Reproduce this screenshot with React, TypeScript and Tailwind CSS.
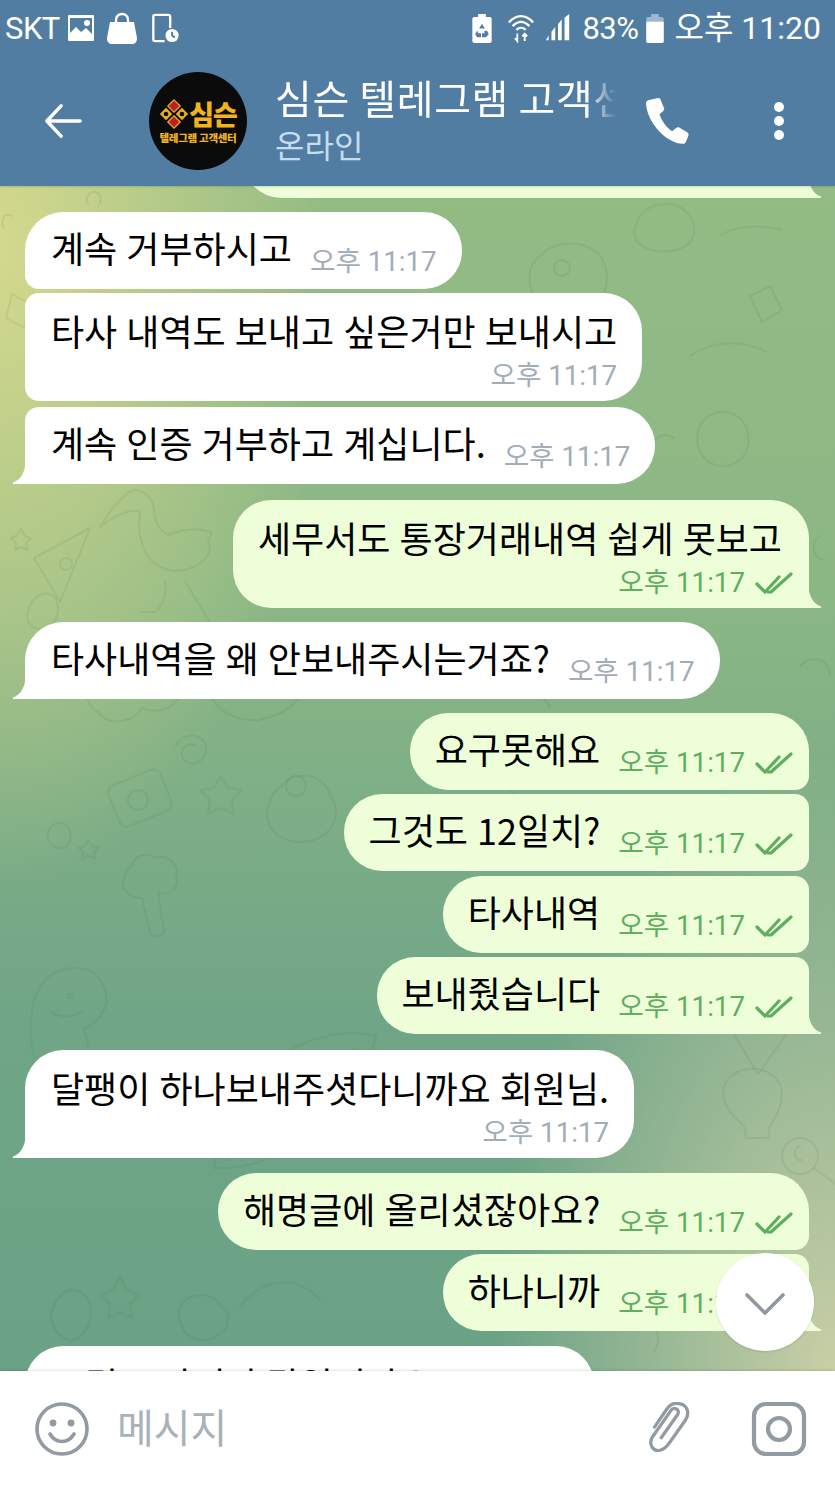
import React from 'react';

type Msg = { text: string; out?: boolean; tail?: boolean; stacked?: boolean; first?: boolean; mt: number };

const messages: Msg[] = [
  { text: '계속 거부하시고', first: true, mt: 14 },
  { text: '타사 내역도 보내고 싶은거만 보내시고', stacked: true, mt: 4 },
  { text: '계속 인증 거부하고 계십니다.', tail: true, mt: 6 },
  { text: '세무서도 통장거래내역 쉽게 못보고', out: true, tail: true, stacked: true, first: true, mt: 16 },
  { text: '타사내역을 왜 안보내주시는거죠?', tail: true, first: true, mt: 14 },
  { text: '요구못해요', out: true, first: true, mt: 14 },
  { text: '그것도 12일치?', out: true, mt: 4 },
  { text: '타사내역', out: true, mt: 5 },
  { text: '보내줬습니다', out: true, tail: true, mt: 4 },
  { text: '달팽이 하나보내주셧다니까요 회원님.', tail: true, stacked: true, first: true, mt: 16 },
  { text: '해명글에 올리셨잖아요?', out: true, first: true, mt: 15 },
  { text: '하나니까', out: true, tail: true, mt: 4 },
];

function Checks() {
  return (
    <svg viewBox="0 0 38 24" className="w-[38px] h-[24px] ml-[10px] shrink-0" fill="none" stroke="#5fae60" strokeWidth="3.2" strokeLinecap="round" strokeLinejoin="round">
      <path d="M2 13l8 8L24 6" />
      <path d="M13 21l3 0L36 3" />
    </svg>
  );
}

function Tail({ out }: { out?: boolean }) {
  if (out) {
    return (
      <svg viewBox="0 0 14 24" className="absolute -right-[13px] bottom-0 w-[14px] h-[24px]">
        <path d="M0 0C1 12 5 20 13 22.5 13.5 23.5 13 24 12 24H0Z" fill="#eefed9" />
      </svg>
    );
  }
  return (
    <svg viewBox="0 0 14 24" className="absolute -left-[13px] bottom-0 w-[14px] h-[24px]">
      <path d="M14 0C13 12 9 20 1 22.5 .5 23.5 1 24 2 24H14Z" fill="#ffffff" />
    </svg>
  );
}

function Bubble({ text, out, tail, stacked, first, mt }: Msg) {
  const timeColor = out ? 'text-[#5fae60]' : 'text-[#a3adb8]';
  const time = (
    <span className={`flex items-center whitespace-nowrap text-[27.7px] leading-[32px] font-['Roboto','Noto_Sans_CJK_KR',sans-serif] ${timeColor}`}>
      오후 11:17{out && <Checks />}
    </span>
  );
  const shape = out
    ? `bg-[#eefed9] pl-[25px] pr-[16px] rounded-l-[38px] ${first ? 'rounded-tr-[38px]' : 'rounded-tr-[14px]'} ${tail ? 'rounded-br-none' : 'rounded-br-[14px]'}`
    : `bg-white pl-[26px] pr-[25px] rounded-r-[38px] ${first ? 'rounded-tl-[38px]' : 'rounded-tl-[14px]'} ${tail ? 'rounded-bl-none' : 'rounded-bl-[14px]'}`;
  return (
    <div className={`flex ${out ? 'justify-end pr-[26px]' : 'justify-start pl-[25px]'}`} style={{ marginTop: mt }}>
      <div className={`relative ${shape}`}>
        {stacked ? (
          <div className="flex flex-col h-[108px] pt-[12px]">
            <p className={`text-[36px] leading-[50px] [word-spacing:1px] text-black whitespace-nowrap ${out ? 'pr-[11px]' : ''}`}>{text}</p>
            <div className="flex justify-end mt-[5px]">{time}</div>
          </div>
        ) : (
          <div className="flex items-end h-[77px] pb-[11px]">
            <p className="text-[36px] leading-[50px] [word-spacing:1px] text-black whitespace-nowrap pb-[6px]">{text}</p>
            <div className="ml-[18px]">{time}</div>
          </div>
        )}
        {tail && <Tail out={out} />}
      </div>
    </div>
  );
}

// faint wallpaper drawing behind the messages
function Doodles() {
  return (
    <svg className="absolute inset-0 w-full h-full" viewBox="0 0 835 1185" fill="none" stroke="#3d6b45" strokeOpacity="0.1" strokeWidth="2" strokeLinecap="round" strokeLinejoin="round">
      {/* duck */}
      <path d="M130 305c12-3 22 5 24 18 1 12 4 20 14 26 14-6 32-8 44-2l-4 8c6 10-4 24-20 28-14 4-26 2-36-8-12-12-14-32-12-50-12-2-24 4-40 16 8-14 18-26 30-36z" />
      <path d="M165 396c2 12-2 24-10 30l-14 0M185 395l30 50" />
      {/* pizza and mushroom */}
      <path d="M34 372l56-30-30 74-26-44z" />
      <circle cx="66" cy="378" r="6" />
      <path d="M30 420c8-18 28-16 28 2s-12 22-22 20-10-12-6-22z" />
      <path d="M16 350l5-7 4 7 6 2-5 5 1 7-6-3-6 3 1-7-5-5z" />
      {/* cloud face */}
      <path d="M92 500c-8-14 8-30 24-24 16-8 36-6 42 8 18 0 28 14 20 26-4 14-24 18-36 12-8 16-36 18-44 4-12-6-14-20-6-26z" />
      <path d="M128 506c6 8 14 6 20-2" />
      {/* bowl */}
      <path d="M212 494c20-22 66-20 88-2 8 16-8 36-42 42-30 2-54-18-46-40z" />
      {/* swirl, camera, stars */}
      <path d="M196 560c-10-6-18 6-12 14 10 8 24 0 22-14-4-14-24-14-30 0" />
      <rect x="112" y="590" width="56" height="44" rx="8" transform="rotate(-22 140 612)" />
      <circle cx="138" cy="614" r="10" />
      <path d="M220 590l8 12 14 2-10 10 2 14-14-6-12 6 2-14-10-10 14-2z" />
      <path d="M88 654l4 6 7 1-5 5 1 7-7-3-6 3 1-7-5-5 7-1z" />
      {/* round creature */}
      <path d="M282 600c12-18 44-12 48 10 12 14 6 36-16 44-26 8-52-8-46-32 2-10 6-18 14-22z" />
      <circle cx="296" cy="600" r="10" />
      {/* mushroom and broccoli */}
      <path d="M48 646c4-12 20-12 22 0 2 10-2 16-10 16s-14-8-12-16z" />
      <path d="M132 680c2-12 16-14 24-8 14-4 24 8 20 20 4 10-8 18-18 14l6 40c-4 6-10 6-14 0l-8-34c-14 0-22-10-18-20 2-6 4-10 8-12z" />
      {/* dino */}
      <path d="M32 826c2-26 18-44 44-44 20 0 32 16 30 36-4 14-14 22-22 24 4 12 6 24 2 36M32 826c-4 26 0 50 14 70" />
      <circle cx="70" cy="810" r="2" />
      <path d="M52 826c8 6 20 6 30 0" />
      {/* surfboard leaf */}
      <path d="M214 982c2-36 34-90 76-118 28-16 64-20 86-14-6 38-34 82-76 108-28 16-60 26-86 24z" />
      <path d="M226 974c30-34 70-70 130-112" />
      {/* right side */}
      <path d="M724 900c10-22 42-24 56-2 6 18-4 32-10 42l-2 12h-22l-2-12c-10-10-24-20-20-40z" />
      <path d="M728 856l28 46 36-50c-12-12-48-12-64 4z" transform="translate(2 -14)" />
      <circle cx="800" cy="970" r="18" />
      <path d="M800 960c-8 2-6 16 2 14M814 982l30 22" />
      <path d="M640 30c10-14 36-16 46-4 10 6 12 26 0 34-16 8-40 8-50-6-4-8 0-18 4-24z" />
      <path d="M720 50c14-10 40-12 62-6M750 110l20-10 12 24-20 12z" />
      <path d="M540 70c16-18 50-16 62 2 10 18 4 50-18 60-24 6-50-8-54-34-2-12 2-22 10-28z" />
      <circle cx="562" cy="82" r="8" />
      <path d="M700 240c10-22 44-18 48 8 4 18-10 34-28 32-18-2-28-22-20-40z" />
      <path d="M690 170c20-14 50-18 76-4M650 260c4-10 16-14 24-8" />
      <path d="M12 108l18 10-6 24-18-10z" />
      <path d="M12 30c-8-4-12 4-8 12M88 18c-4-6 2-14 8-12s6 10 2 14" />
      <path d="M820 350c-10 6-8 22 4 24M800 480c10-12 30-8 30 10" />
      <path d="M470 500c30-10 60-4 80 20M460 560c10 20 50 30 60 60" />
      <path d="M180 1120c10-16 36-14 42 2 10 6 8 24-6 28-10 8-30 4-34-10-4-8-4-14-2-20z" />
      <path d="M60 1110c10-10 26-6 30 8 4 14-4 32-16 36-14 2-26-16-22-30 2-6 4-10 8-14z" />
      <path d="M240 1120c24-30 60-30 80-6M120 1090l6 14 14 4-10 10 2 14-12-6-12 6 2-14-10-10 14-4z" />
      <path d="M720 1130c10-12 28-8 34 6M650 1136c10 6 10 20 4 30" />
    </svg>
  );
}

function Avatar() {
  return (
    <div className="flex flex-col items-center justify-center w-[98px] h-[98px] rounded-full bg-[#0b0b0b] overflow-hidden shrink-0">
      <div className="flex items-center">
        <svg viewBox="0 0 34 34" className="w-[30px] h-[30px]">
          <path d="M17 1l7 7-7 7-7-7z" fill="#b8202a" stroke="#e9ae1e" strokeWidth="1.4" />
          <path d="M8 10l7 7-7 7-7-7z" fill="#e9ae1e" />
          <path d="M26 10l7 7-7 7-7-7z" fill="#e9ae1e" />
          <path d="M17 19l7 7-7 7-7-7z" fill="#b8202a" stroke="#e9ae1e" strokeWidth="1.4" />
          <circle cx="8" cy="17" r="2.6" fill="#0b0b0b" />
          <circle cx="26" cy="17" r="2.6" fill="#0b0b0b" />
        </svg>
        <span className="text-[27px] leading-[30px] font-black text-[#f1b41d] tracking-[-1px]">심슨</span>
      </div>
      <span className="text-[10.5px] leading-[12px] font-black text-[#f1b41d] tracking-[-0.3px] mt-[3px] whitespace-nowrap">텔레그램 고객센터</span>
    </div>
  );
}

function StatusLeft() {
  return (
    <div className="flex items-center">
      <span className="text-[31px] leading-none tracking-[-0.5px] font-['Roboto',sans-serif]">SKT</span>
      <svg viewBox="0 0 28 28" className="w-[28px] h-[28px] ml-[7px]" fill="#fff">
        <path fillRule="evenodd" d="M2 1h24a1 1 0 011 1v24a1 1 0 01-1 1H2a1 1 0 01-1-1V2a1 1 0 011-1zm1 3v15l6-6 5 5 5-4 6 6V4zm17 2a3 3 0 110 6 3 3 0 010-6z" />
      </svg>
      <svg viewBox="0 0 30 32" className="w-[30px] h-[32px] ml-[12px]" fill="#fff">
        <path d="M3 10h24l3 16c0 4-2 6-5 6H5c-3 0-5-2-5-6z" />
        <path d="M9 12V8c0-8 12-8 12 0v4" fill="none" stroke="#fff" strokeWidth="2.4" />
      </svg>
      <svg viewBox="0 0 30 32" className="w-[29px] h-[30px] ml-[14px]" fill="none" stroke="#fff" strokeWidth="2.5">
        <path d="M14 30H4a2 2 0 01-2-2V4a2 2 0 012-2h14a2 2 0 012 2v12" />
        <circle cx="22" cy="24" r="7" fill="#fff" stroke="none" />
        <path d="M22 20v4l3 2" stroke="#517da2" strokeWidth="2" />
      </svg>
    </div>
  );
}

function StatusRight() {
  return (
    <div className="flex items-center">
      <svg viewBox="0 0 20 30" className="w-[20px] h-[29px]" fill="#fff">
        <path fillRule="evenodd" d="M6 0h8v3h4a2 2 0 012 2v23a2 2 0 01-2 2H2a2 2 0 01-2-2V5a2 2 0 012-2h4zm4 10l-3 5h6zm-5 7l-2 4 2 3h4v-4H6zm10 0l-3 1 1 2h-3v4h4l3-3z" />
      </svg>
      <svg viewBox="0 0 30 30" className="w-[28px] h-[30px] ml-[15px]" fill="none" stroke="#fff" strokeWidth="2.4">
        <path d="M2 9c8-9 18-9 26 0M6 13c6-6 12-6 18 0M10 17c3-3 7-3 10 0" />
        <path d="M11 21v8M8.5 26l2.500 3 0-3M19 29v-8M16.500 24l2.500-3 2.500 3" strokeWidth="2" />
      </svg>
      <svg viewBox="0 0 28 30" className="w-[28px] h-[28px] ml-[9px]" fill="#fff">
        <path d="M1 28l3-5v5z" />
        <path d="M7 28v-9l4-5v14z" />
        <path d="M14 28V11l4-5v22z" />
        <path d="M21 28V4l5-4v28z" />
      </svg>
      <span className="text-[31px] leading-none tracking-[-0.5px] ml-[10px] font-['Roboto',sans-serif]">83%</span>
      <svg viewBox="0 0 18 30" className="w-[18px] h-[29px] ml-[8px]" fill="#fff">
        <path d="M5 0h8v3h3a2 2 0 012 2v25H0V5a2 2 0 012-2h3z" fillOpacity="0.45" />
        <path d="M0 8h18v20a2 2 0 01-2 2H2a2 2 0 01-2-2z" />
      </svg>
      <span className="text-[32px] leading-none ml-[10px] font-['Roboto','Noto_Sans_CJK_KR',sans-serif] whitespace-nowrap">오후 11:20</span>
    </div>
  );
}

export default function App() {
  return (
    <div className="flex flex-col w-[835px] h-[1485px] overflow-hidden font-['Noto_Sans_CJK_KR','Noto_Sans',sans-serif]">
      <header className="relative z-10 h-[186px] shrink-0 bg-[#517da2] text-white shadow-[0_1px_2px_rgba(0,0,0,0.15)]">
        <div className="flex items-center justify-between h-[56px] pl-[5px] pr-[14px]">
          <StatusLeft />
          <StatusRight />
        </div>
        <div className="flex items-center h-[130px]">
          <svg viewBox="0 0 40 36" className="ml-[44px] w-[38px] h-[36px] shrink-0" fill="none" stroke="#fff" strokeWidth="3.6" strokeLinecap="round" strokeLinejoin="round">
            <path d="M38 18H3M18 2L3 18l15 16" />
          </svg>
          <div className="ml-[67px]">
            <Avatar />
          </div>
          <div className="ml-[28px] w-[341px] pb-[6px] overflow-hidden">
            <div className="whitespace-nowrap text-[40px] leading-[52px] tracking-[0.6px] [mask-image:linear-gradient(to_right,#000_91%,transparent)]">심슨 텔레그램 고객센터</div>
            <div className="text-[32px] leading-[42px] text-[#c6dcef]">온라인</div>
          </div>
          <svg viewBox="0 0 44 46" className="ml-[30px] w-[44px] h-[46px] shrink-0" fill="#fff">
            <path d="M3 2l9-2c1 0 2 .5 2.500 1.500L18 10c.5 1 .2 2-.5 2.700l-4 3.500c2 6 6.500 13 12.500 17l4.500-3.500c.8-.6 1.800-.7 2.700-.2l8.300 5c1 .6 1.300 1.700 1 2.700l-2.500 6.500c-.5 1.200-1.500 2-3 2.100C22 46 1 26 0 5c0-1.500 1.500-2.700 3-3z" />
          </svg>
          <svg viewBox="0 0 12 40" className="ml-[83px] w-[12px] h-[40px] shrink-0" fill="#fff">
            <circle cx="6" cy="6" r="5" />
            <circle cx="6" cy="20" r="5" />
            <circle cx="6" cy="34" r="5" />
          </svg>
        </div>
      </header>

      <main className="relative flex-1 overflow-hidden bg-[radial-gradient(ellipse_330px_640px_at_0px_60px,#d4d98d_0%,rgba(212,217,141,0)_100%),radial-gradient(ellipse_340px_620px_at_835px_1185px,#c9cfa6_0%,rgba(201,207,166,0)_100%),linear-gradient(to_bottom,#93bb84_0%,#8bb785_35%,#70a587_70%,#6aa285_100%)]">
        <Doodles />
        <div className="relative">
          <div className="flex justify-end pr-[26px] mt-[-96px]">
            <div className="relative w-[566px] h-[108px] rounded-l-[38px] rounded-tr-[38px] bg-[#eefed9]">
              <Tail out />
            </div>
          </div>
          {messages.map((m, i) => (
            <Bubble key={i} {...m} />
          ))}
          <div className="flex justify-start pl-[25px] mt-[15px]">
            <div className="w-[569px] h-[77px] rounded-[38px] bg-white pl-[60px] pt-[12px]">
              <p className="text-[36px] leading-[50px] text-black whitespace-nowrap">링크 가져가 말입니다요?</p>
            </div>
          </div>
        </div>
        <button className="absolute right-[21px] top-[1067px] flex items-center justify-center w-[98px] h-[98px] rounded-full bg-white shadow-[0_1px_2px_rgba(0,0,0,0.12)]">
          <svg viewBox="0 0 40 22" className="mt-[3px] w-[40px] h-[22px]" fill="none" stroke="#8f98a0" strokeWidth="3.6" strokeLinecap="round" strokeLinejoin="round">
            <path d="M2 2l18 18L38 2" />
          </svg>
        </button>
      </main>

      <footer className="relative z-10 flex items-start h-[114px] shrink-0 bg-white shadow-[0_-1px_2px_rgba(0,0,0,0.12)]">
        <svg viewBox="0 0 56 56" className="ml-[34px] mt-[30px] w-[56px] h-[56px] shrink-0" fill="none" stroke="#929aa3" strokeWidth="3.6" strokeLinecap="round">
          <circle cx="28" cy="28" r="25" />
          <path d="M16 33c6 10 18 10 24 0" />
          <circle cx="19" cy="22" r="3.4" fill="#929aa3" stroke="none" />
          <circle cx="37" cy="22" r="3.4" fill="#929aa3" stroke="none" />
        </svg>
        <span className="ml-[27px] mt-[29px] text-[40px] leading-[52px] text-[#a9b1b9]">메시지</span>
        <svg viewBox="0 0 50 56" className="ml-auto mt-[31px] w-[50px] h-[54px] shrink-0" fill="none" stroke="#929aa3" strokeWidth="3.4" strokeLinecap="round" strokeLinejoin="round">
          <path d="M18 37L35 13c3-5-4-9-7-4L9 36c-5 8 1 16 8 14 4-1 7-4 9-7l17-24c5-8 2-15-5-17-6-2-11 1-14 5L11 26" />
        </svg>
        <svg viewBox="0 0 56 56" className="ml-[58px] mr-[28px] mt-[30px] w-[56px] h-[56px] shrink-0" fill="none" stroke="#929aa3" strokeWidth="4.2">
          <rect x="3" y="3" width="50" height="50" rx="12" />
          <circle cx="28" cy="28" r="11" />
        </svg>
      </footer>
    </div>
  );
}
